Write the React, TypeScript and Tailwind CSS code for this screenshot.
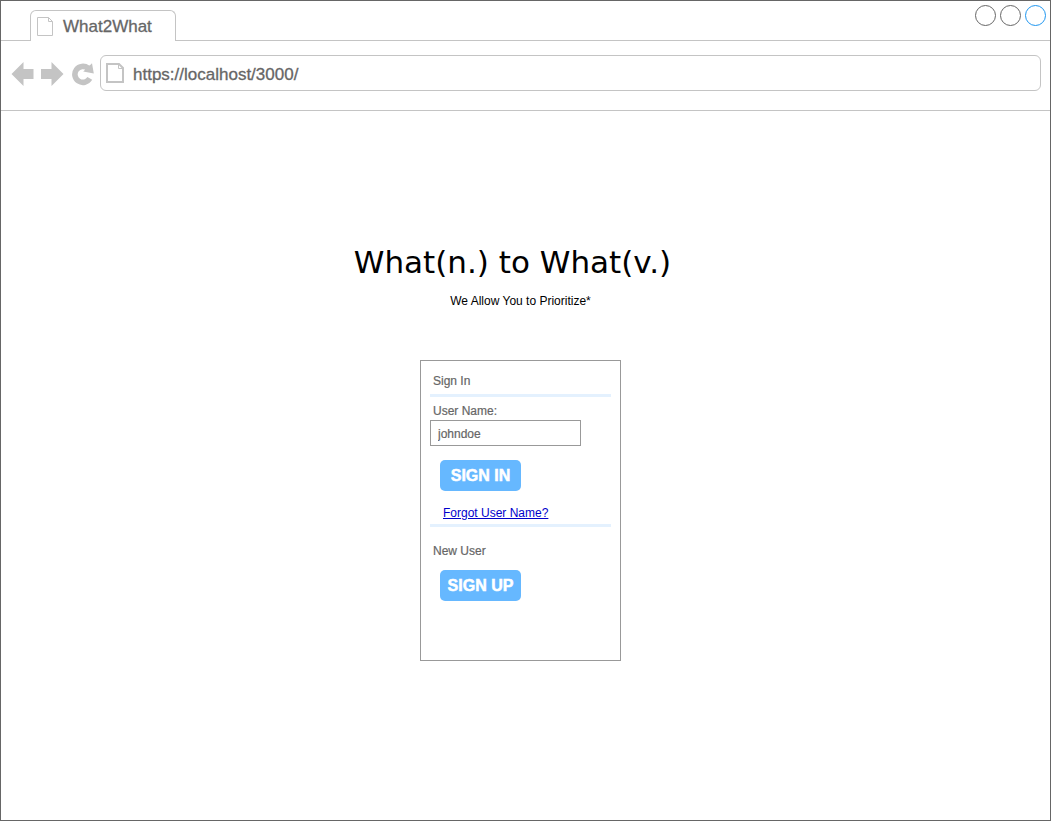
import { useState } from "react";

function TabPageIcon() {
  return (
    <svg viewBox="0 0 16 20" className="h-5 w-4 shrink-0" fill="none" stroke="#c4c4c4" strokeWidth="1" aria-hidden="true">
      <path d="M0.5 0.5H11.5L15.5 4.5V18.5H0.5Z" />
      <path d="M11.5 0.5V4.5H15.5" />
    </svg>
  );
}

function AddressPageIcon() {
  return (
    <svg viewBox="0 0 18 20" className="h-5 w-[18px] shrink-0" fill="none" stroke="#c4c4c4" strokeWidth="2" aria-hidden="true">
      <path d="M1 1H13L17 5V19H1Z" />
      <path d="M12.5 1V5.5H17" strokeWidth="1" />
    </svg>
  );
}

function WindowButton({ label, color }: { label: string; color: string }) {
  return <button type="button" aria-label={label} className={`size-[21px] rounded-full border ${color}`} />;
}

function TabStrip() {
  return (
    <div className="flex h-10 items-end">
      <div className="w-[29px] self-stretch border-b border-[#c4c4c4]" />
      <div className="flex h-[31px] w-[146px] items-center rounded-t-md border-x border-t border-[#c4c4c4] pt-0.5 pl-1.5 text-[17px] leading-5 text-[#666666]">
        <TabPageIcon />
        <span className="ml-2.5 [-webkit-text-stroke:0.3px_#666666]">What2What</span>
      </div>
      <div className="flex flex-1 items-start justify-end gap-1 self-stretch border-b border-[#c4c4c4] pt-1 pr-1">
        <WindowButton label="Minimize" color="border-[#666666]" />
        <WindowButton label="Maximize" color="border-[#666666]" />
        <WindowButton label="Close" color="border-[#1e96f0]" />
      </div>
    </div>
  );
}

function Toolbar() {
  const [url, setUrl] = useState("https://localhost/3000/");
  return (
    <div className="flex h-[70px] items-start border-b border-[#c4c4c4] pt-3.5 pr-[9px] pl-2.5">
      <div className="flex h-9 items-center pt-0.5">
        <button type="button" aria-label="Back">
          <svg viewBox="0 0 23 24" className="h-6 w-[23px]" fill="#c4c4c4">
            <path d="M0.5 12L12.5 0V7H22.5V17H12.5V24Z" />
          </svg>
        </button>
        <button type="button" aria-label="Forward" className="ml-[7px]">
          <svg viewBox="0 0 23 24" className="h-6 w-[23px]" fill="#c4c4c4">
            <path d="M22.5 12L10.5 0V7H0V17H10.5V24Z" />
          </svg>
        </button>
        <button type="button" aria-label="Reload" className="ml-2">
          <svg viewBox="0 0 22 24" className="h-6 w-[22px]">
            <path d="M16 6.2A8 8 0 1 0 17.8 16.4" fill="none" stroke="#c4c4c4" strokeWidth="5.6" />
            <path d="M20 1.2L21.8 11.4L11.2 9.6L15 6Z" fill="#c4c4c4" />
            <path d="M14 3.4L19 3.8L19.8 9.6L13 8.6Z" fill="#c4c4c4" />
          </svg>
        </button>
      </div>
      <div className="ml-1.5 flex h-9 flex-1 items-center rounded-md border border-[#c4c4c4] pl-[5px]">
        <AddressPageIcon />
        <input
          aria-label="Address"
          value={url}
          onChange={(e) => setUrl(e.target.value)}
          className="ml-[9px] min-w-0 flex-1 bg-transparent pt-[3px] text-[17px] leading-5 text-[#666666] outline-none [-webkit-text-stroke:0.3px_#666666]"
        />
      </div>
    </div>
  );
}

function SignInCard() {
  const [name, setName] = useState("johndoe");
  return (
    <section className="mt-[49px] min-h-[301px] w-[201px] border border-[#999999] px-[9px] pt-2.5 text-xs leading-5 text-[#666666]">
      <form onSubmit={(e) => e.preventDefault()}>
        <h2 className="pl-[3px] [-webkit-text-stroke:0.2px_#666666]">Sign In</h2>
        <div className="mt-[3px] h-[3px] bg-[#e4f1fe]" />
        <label htmlFor="username" className="mt-1 block h-[19px] pl-[3px] [-webkit-text-stroke:0.2px_#666666]">
          User Name:
        </label>
        <input
          id="username"
          value={name}
          onChange={(e) => setName(e.target.value)}
          className="block h-[26px] w-[151px] border border-[#999999] px-[7px] pt-0.5 outline-none [-webkit-text-stroke:0.2px_#666666]"
        />
        <button
          type="submit"
          className="mt-3.5 ml-2.5 block h-[31px] w-[81px] rounded-[5px] bg-[#66b8ff] text-base font-bold text-white [-webkit-text-stroke:0.5px_white]"
        >
          SIGN IN
        </button>
        <a href="#forgot" className="mt-3 ml-[13px] block w-fit text-[#0000cc] underline">
          Forgot User Name?
        </a>
      </form>
      <div className="mt-px h-[3px] bg-[#e4f1fe]" />
      <h2 className="mt-3.5 pl-[3px] [-webkit-text-stroke:0.2px_#666666]">New User</h2>
      <button
        type="button"
        className="mt-[9px] ml-2.5 block h-[31px] w-[81px] rounded-[5px] bg-[#66b8ff] text-base font-bold text-white [-webkit-text-stroke:0.5px_white]"
      >
        SIGN UP
      </button>
    </section>
  );
}

export default function App() {
  return (
    <div className="flex min-h-screen flex-col border border-[#666666] bg-white font-['Liberation_Sans',Arial,sans-serif]">
      <header>
        <TabStrip />
        <Toolbar />
      </header>
      <main className="flex flex-1 flex-col items-center pt-[131px] pr-2.5 pb-8">
        <h1 className="pr-4 font-['DejaVu_Sans',Verdana,sans-serif] text-[31px] leading-10 text-black">
          What(n.) to What(v.)
        </h1>
        <p className="mt-[9px] text-xs leading-5 text-black">We Allow You to Prioritize*</p>
        <SignInCard />
      </main>
    </div>
  );
}
